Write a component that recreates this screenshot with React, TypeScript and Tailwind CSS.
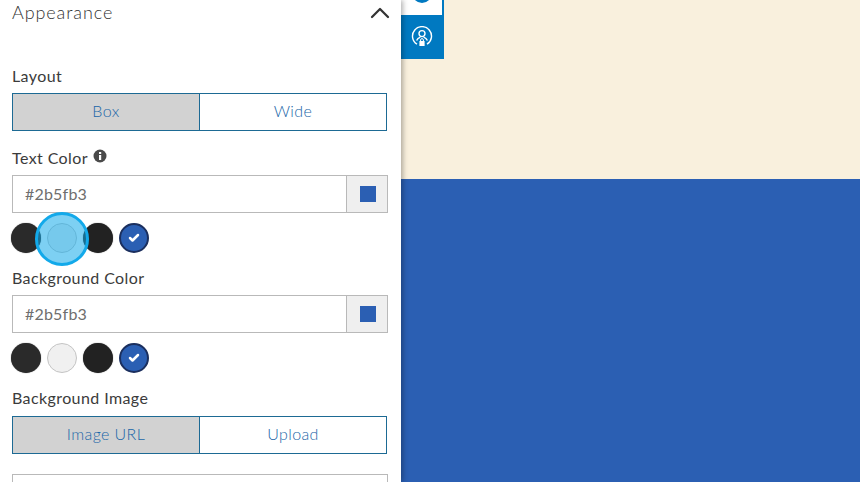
import { Check, ChevronUp } from 'lucide-react';

const FONT = "font-['Lato','Noto_Sans',sans-serif]";

function Segmented({ left, right }: { left: string; right: string }) {
  return (
    <div className="flex h-[38px] w-[375px] border border-[#1d6a94] text-[16px] font-light leading-5 tracking-[0.4px] text-[#1a66a8]">
      <div className="flex w-[187px] items-center justify-center border-r border-[#1d6a94] bg-[#d2d2d2] pb-0.5">{left}</div>
      <div className="flex flex-1 items-center justify-center bg-white pb-0.5">{right}</div>
    </div>
  );
}

function ColorInput() {
  return (
    <div className="flex h-[38px] w-[376px] border border-[#b9b9b9] bg-white">
      <div className="flex flex-1 items-center pl-3 text-[16px] tracking-[0.2px] text-[#6e6e6e]">#2b5fb3</div>
      <div className="flex w-[41px] items-center justify-center border-l border-[#b9b9b9] bg-[#efefef] pl-px">
        <div className="h-4 w-4 bg-[#2b5fb3]" />
      </div>
    </div>
  );
}

function Swatches() {
  return (
    <div className="-ml-px flex h-[30px] gap-1.5">
      <div className="h-[30px] w-[30px] rounded-full bg-[#2a2a2a] shadow-[0_0_1px_#555]" />
      <div className="h-[30px] w-[30px] rounded-full border border-[#c4c4c4] bg-[#f0f0f0]" />
      <div className="h-[30px] w-[30px] rounded-full bg-[#222222] shadow-[0_0_1px_#555]" />
      <div className="flex h-[30px] w-[30px] items-center justify-center rounded-full border-2 border-[#1b2f5e] bg-[#2b5fb3]">
        <Check size={12} strokeWidth={5} className="text-white" />
      </div>
    </div>
  );
}

function Label({ children }: { children: React.ReactNode }) {
  return <div className="text-[16px] leading-5 tracking-[0.4px] text-[#3b3b3b]">{children}</div>;
}

export default function App() {
  return (
    <div className={`flex h-[482px] w-[860px] overflow-hidden bg-white ${FONT}`}>
      {/* settings panel */}
      <aside className="relative z-10 h-full w-[401px] shrink-0 overflow-hidden bg-white px-3 shadow-[2px_0_5px_rgba(0,0,0,0.3)]">
        <div className="flex h-6 items-center justify-between">
          <span className="text-[18px] font-light tracking-[0.9px] text-[#333333]">Appearance</span>
          <ChevronUp size={32} strokeWidth={1.7} className="mr-[-7px] mt-0.5 text-[#333333]" />
        </div>

        <div className="mt-[42px]"><Label>Layout</Label></div>
        <div className="mt-[7px]"><Segmented left="Box" right="Wide" /></div>

        <div className="mt-[17px] flex items-center gap-[5px]">
          <Label>Text Color</Label>
          <svg width="14" height="14" viewBox="0 0 14 14" className="-mt-1">
            <circle cx="7" cy="7" r="6.5" fill="#4a4a4a" />
            <rect x="6" y="6" width="2.2" height="5" fill="#fff" />
            <rect x="6" y="3" width="2.2" height="2" fill="#fff" />
          </svg>
        </div>
        <div className="mt-[7px]"><ColorInput /></div>
        <div className="mt-[10px]"><Swatches /></div>

        <div className="mt-[15px]"><Label>Background Color</Label></div>
        <div className="mt-[7px]"><ColorInput /></div>
        <div className="mt-[10px]"><Swatches /></div>

        <div className="mt-[15px]"><Label>Background Image</Label></div>
        <div className="mt-2"><Segmented left="Image URL" right="Upload" /></div>

        <div className="mt-5 h-[38px] w-[376px] border border-[#b9b9b9] bg-white" />

        {/* click highlight */}
        <div className="absolute left-[35px] top-[212px] h-[54px] w-[54px] rounded-full border-[3px] border-[#12a9ea] bg-[#12a9ea]/55" />
      </aside>

      {/* preview canvas */}
      <main className="relative flex flex-1 flex-col">
        <div className="h-[179px] bg-[#f9f0dd]" />
        <div className="flex-1 bg-[#2b5fb3]" />
        <div className="absolute left-0 top-0 w-[43px]">
          <div className="relative h-[15px] overflow-hidden border-r-2 border-[#0079c1] bg-white">
            <div className="absolute left-[11px] top-[-17px] h-[20px] w-[20px] rounded-full bg-[#0079c1]" />
          </div>
          <div className="flex h-[44px] items-center justify-center bg-[#0079c1] pr-0.5">
            <svg width="22" height="22" viewBox="0 0 22 22" fill="none" stroke="#fff" strokeWidth="1.4">
              <path d="M6 18.2A9.5 9.5 0 1 1 16 18.2" />
              <circle cx="11" cy="7.6" r="3" />
              <path d="M5.6 14.6c.8-2 2.6-3 3.8-3.4M16.4 14.6c-.8-2-2.6-3-3.8-3.4" />
              <rect x="8.4" y="15" width="5.2" height="5" fill="#fff" stroke="none" />
              <path d="M9.6 15v-1a1.4 1.4 0 0 1 2.8 0v1" strokeWidth="1" />
            </svg>
          </div>
        </div>
      </main>
    </div>
  );
}
